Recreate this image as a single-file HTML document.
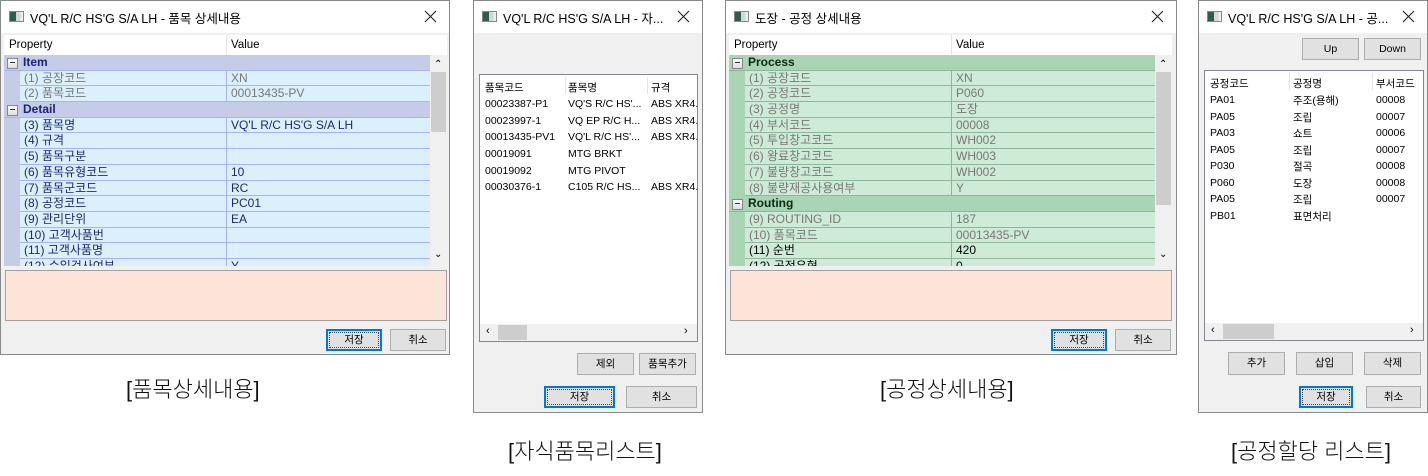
<!DOCTYPE html>
<html><head><meta charset="utf-8">
<style>
*{box-sizing:border-box;margin:0;padding:0}
body{width:1428px;height:476px;background:#fff;position:relative;overflow:hidden;font-family:"Liberation Sans","Noto Sans CJK KR","NanumGothic",sans-serif;font-size:11px;color:#000}
.win{position:absolute;background:#f0f0f0;border:1px solid #8a8a8a}
.tb{position:absolute;left:0;top:0;right:0;height:32px;background:#fff}
.ic{position:absolute;left:8px;top:10px;width:15px;height:11px;border:1px solid #888;background:linear-gradient(90deg,#2f5d4a 0 45%,#cfd8dc 45% 80%,#eee 80%)}
.tt{position:absolute;left:29px;top:7px;font-size:12.5px;white-space:nowrap;color:#000}
.x{position:absolute;right:12px;top:9px;width:13px;height:13px}
.a{position:absolute}
.btn{position:absolute;background:#e1e1e1;border:1px solid #adadad;text-align:center;font-size:10.5px;color:#000}
.btn.d{border:2px solid #0078d7;outline:1px dotted #444;outline-offset:-4px}
.pg{position:absolute;overflow:hidden}
.hd{position:absolute;height:20px;background:#fff;font-size:11.5px;line-height:20px}
.row{position:relative;height:15.7px;border-bottom:1px solid var(--ln);font-size:12px;line-height:15px;white-space:nowrap}
.cat{background:var(--cat);font-weight:bold;color:var(--ct);padding-left:19px}
.cat:before{content:"";position:absolute;left:3px;top:3px;width:9px;height:9px;border:1px solid #888;background:linear-gradient(#fff,#ddd)}
.cat:after{content:"";position:absolute;left:6px;top:7px;width:5px;height:1px;background:#333}
.dr{margin-left:16px;background:var(--rw)}
.dr span{position:absolute;left:4px}
.dr b{font-weight:normal;position:absolute;left:206px;padding-left:4px;border-left:1px solid var(--ln);height:15px}
.g{color:#777}
.sb{position:absolute;background:#f0f0f0}
.thumb{position:absolute;background:#cdcdcd}
.pink{position:absolute;background:#fde4d8;border:1px solid #a0a0a0}
.list{position:absolute;background:#fff;border:1px solid #828790;overflow:hidden}
.lr{position:absolute;font-size:10.5px;white-space:nowrap}
.cap{position:absolute;font-size:22px;font-weight:300;color:#111;white-space:nowrap}
</style></head><body>

<!-- Window 1 -->
<div class="win" style="left:0;top:0;width:450px;height:355px">
 <div class="tb"><div class="ic"></div><div class="tt">VQ'L R/C HS'G S/A LH - 품목 상세내용</div><svg class="x" viewBox="0 0 13 13"><path d="M1 1L12 12M12 1L1 12" stroke="#222" stroke-width="1.1"/></svg></div>
 <div class="hd" style="left:3px;top:34px;width:443px;padding-left:5px">Property<span style="position:absolute;left:222px;border-left:1px solid #e5e5e5;padding-left:4px">Value</span></div>
 <div class="pg" style="left:3px;top:54px;width:426px;height:211px;background:#c5cce8;--cat:#c5cce8;--rw:#dbeffc;--ln:#a9b3ee;--ct:#1a237e">
  <div class="row cat">Item</div>
  <div class="row dr g"><span>(1) 공장코드</span><b>XN</b></div>
  <div class="row dr g"><span>(2) 품목코드</span><b>00013435-PV</b></div>
  <div class="row cat">Detail</div>
  <div class="row dr" style="color:#1c2a6e"><span>(3) 품목명</span><b>VQ'L R/C HS'G S/A LH</b></div>
  <div class="row dr" style="color:#1c2a6e"><span>(4) 규격</span><b></b></div>
  <div class="row dr" style="color:#1c2a6e"><span>(5) 품목구분</span><b></b></div>
  <div class="row dr" style="color:#1c2a6e"><span>(6) 품목유형코드</span><b>10</b></div>
  <div class="row dr" style="color:#1c2a6e"><span>(7) 품목군코드</span><b>RC</b></div>
  <div class="row dr" style="color:#1c2a6e"><span>(8) 공정코드</span><b>PC01</b></div>
  <div class="row dr" style="color:#1c2a6e"><span>(9) 관리단위</span><b>EA</b></div>
  <div class="row dr" style="color:#1c2a6e"><span>(10) 고객사품번</span><b></b></div>
  <div class="row dr" style="color:#1c2a6e"><span>(11) 고객사품명</span><b></b></div>
  <div class="row dr" style="color:#1c2a6e"><span>(12) 수입검사여부</span><b>Y</b></div>
 </div>
 <div class="sb" style="left:429px;top:54px;width:17px;height:211px"><div class="a" style="left:4px;top:4px;font-size:10px">⌃</div><div class="thumb" style="left:1px;top:17px;width:15px;height:60px"></div><div class="a" style="left:4px;top:194px;font-size:10px">⌄</div></div>
 <div class="pink" style="left:4px;top:269px;width:442px;height:51px"></div>
 <div class="btn d" style="left:325px;top:328px;width:56px;height:22px;line-height:18px">저장</div>
 <div class="btn" style="left:389px;top:328px;width:56px;height:22px;line-height:20px">취소</div>
</div>

<!-- Window 2 -->
<div class="win" style="left:473px;top:0;width:230px;height:413px">
 <div class="tb"><div class="ic"></div><div class="tt">VQ'L R/C HS'G S/A LH - 자...</div><svg class="x" viewBox="0 0 13 13"><path d="M1 1L12 12M12 1L1 12" stroke="#222" stroke-width="1.1"/></svg></div>
 <div class="list" style="left:5px;top:73px;width:219px;height:268px">
  <div class="lr" style="left:5px;top:5px">품목코드</div><div class="a" style="left:85px;top:2px;width:1px;height:17px;background:#e5e5e5"></div>
  <div class="lr" style="left:88px;top:5px">품목명</div><div class="a" style="left:167px;top:2px;width:1px;height:17px;background:#e5e5e5"></div>
  <div class="lr" style="left:171px;top:5px">규격</div>
  <div class="lr" style="left:5px;top:23px">00023387-P1</div><div class="lr" style="left:88px;top:23px">VQ'S R/C HS'...</div><div class="lr" style="left:171px;top:23px">ABS XR4.</div>
  <div class="lr" style="left:5px;top:40px">00023997-1</div><div class="lr" style="left:88px;top:40px">VQ EP R/C H...</div><div class="lr" style="left:171px;top:40px">ABS XR4.</div>
  <div class="lr" style="left:5px;top:56px">00013435-PV1</div><div class="lr" style="left:88px;top:56px">VQ'L R/C HS'...</div><div class="lr" style="left:171px;top:56px">ABS XR4.</div>
  <div class="lr" style="left:5px;top:73px">00019091</div><div class="lr" style="left:88px;top:73px">MTG BRKT</div>
  <div class="lr" style="left:5px;top:90px">00019092</div><div class="lr" style="left:88px;top:90px">MTG PIVOT</div>
  <div class="lr" style="left:5px;top:106px">00030376-1</div><div class="lr" style="left:88px;top:106px">C105 R/C HS...</div><div class="lr" style="left:171px;top:106px">ABS XR4.</div>
  <div class="sb" style="left:0;top:249px;width:217px;height:17px"><div class="a" style="left:6px;top:1px;font-size:11px">‹</div><div class="thumb" style="left:18px;top:1px;width:29px;height:15px"></div><div class="a" style="left:204px;top:1px;font-size:11px">›</div></div>
 </div>
 <div class="btn" style="left:103px;top:352px;width:57px;height:22px;line-height:20px">제외</div>
 <div class="btn" style="left:165px;top:352px;width:57px;height:22px;line-height:20px">품목추가</div>
 <div class="btn d" style="left:70px;top:385px;width:71px;height:22px;line-height:18px">저장</div>
 <div class="btn" style="left:152px;top:385px;width:71px;height:22px;line-height:20px">취소</div>
</div>

<!-- Window 3 -->
<div class="win" style="left:725px;top:0;width:452px;height:355px">
 <div class="tb"><div class="ic"></div><div class="tt">도장 - 공정 상세내용</div><svg class="x" viewBox="0 0 13 13"><path d="M1 1L12 12M12 1L1 12" stroke="#222" stroke-width="1.1"/></svg></div>
 <div class="hd" style="left:3px;top:34px;width:443px;padding-left:5px">Property<span style="position:absolute;left:222px;border-left:1px solid #e5e5e5;padding-left:4px">Value</span></div>
 <div class="pg" style="left:3px;top:54px;width:426px;height:211px;background:#a9d5b5;--cat:#a9d5b5;--rw:#cdebd7;--ln:#8fb69a;--ct:#0d2a14">
  <div class="row cat">Process</div>
  <div class="row dr g"><span>(1) 공장코드</span><b>XN</b></div>
  <div class="row dr g"><span>(2) 공정코드</span><b>P060</b></div>
  <div class="row dr g"><span>(3) 공정명</span><b>도장</b></div>
  <div class="row dr g"><span>(4) 부서코드</span><b>00008</b></div>
  <div class="row dr g"><span>(5) 투입창고코드</span><b>WH002</b></div>
  <div class="row dr g"><span>(6) 왕료창고코드</span><b>WH003</b></div>
  <div class="row dr g"><span>(7) 불량창고코드</span><b>WH002</b></div>
  <div class="row dr g"><span>(8) 불량재공사용여부</span><b>Y</b></div>
  <div class="row cat">Routing</div>
  <div class="row dr g"><span>(9) ROUTING_ID</span><b>187</b></div>
  <div class="row dr g"><span>(10) 품목코드</span><b>00013435-PV</b></div>
  <div class="row dr"><span>(11) 순번</span><b>420</b></div>
  <div class="row dr"><span>(12) 공정유형</span><b>0</b></div>
 </div>
 <div class="sb" style="left:429px;top:54px;width:17px;height:211px"><div class="a" style="left:4px;top:4px;font-size:10px">⌃</div><div class="thumb" style="left:1px;top:17px;width:15px;height:133px"></div><div class="a" style="left:4px;top:194px;font-size:10px">⌄</div></div>
 <div class="pink" style="left:4px;top:269px;width:442px;height:51px"></div>
 <div class="btn d" style="left:325px;top:328px;width:56px;height:22px;line-height:18px">저장</div>
 <div class="btn" style="left:389px;top:328px;width:56px;height:22px;line-height:20px">취소</div>
</div>

<!-- Window 4 -->
<div class="win" style="left:1198px;top:0;width:230px;height:413px">
 <div class="tb"><div class="ic"></div><div class="tt">VQ'L R/C HS'G S/A LH - 공...</div><svg class="x" viewBox="0 0 13 13"><path d="M1 1L12 12M12 1L1 12" stroke="#222" stroke-width="1.1"/></svg></div>
 <div class="btn" style="left:103px;top:37px;width:57px;height:22px;line-height:20px">Up</div>
 <div class="btn" style="left:165px;top:37px;width:57px;height:22px;line-height:20px">Down</div>
 <div class="list" style="left:5px;top:69px;width:220px;height:271px">
  <div class="lr" style="left:5px;top:5px">공정코드</div><div class="a" style="left:84px;top:2px;width:1px;height:17px;background:#e5e5e5"></div>
  <div class="lr" style="left:88px;top:5px">공정명</div><div class="a" style="left:167px;top:2px;width:1px;height:17px;background:#e5e5e5"></div>
  <div class="lr" style="left:171px;top:5px">부서코드</div>
  <div class="lr" style="left:5px;top:23px">PA01</div><div class="lr" style="left:88px;top:22px">주조(용해)</div><div class="lr" style="left:171px;top:23px">00008</div>
  <div class="lr" style="left:5px;top:40px">PA05</div><div class="lr" style="left:88px;top:39px">조립</div><div class="lr" style="left:171px;top:40px">00007</div>
  <div class="lr" style="left:5px;top:56px">PA03</div><div class="lr" style="left:88px;top:55px">쇼트</div><div class="lr" style="left:171px;top:56px">00006</div>
  <div class="lr" style="left:5px;top:73px">PA05</div><div class="lr" style="left:88px;top:72px">조립</div><div class="lr" style="left:171px;top:73px">00007</div>
  <div class="lr" style="left:5px;top:89px">P030</div><div class="lr" style="left:88px;top:88px">절곡</div><div class="lr" style="left:171px;top:89px">00008</div>
  <div class="lr" style="left:5px;top:106px">P060</div><div class="lr" style="left:88px;top:105px">도장</div><div class="lr" style="left:171px;top:106px">00008</div>
  <div class="lr" style="left:5px;top:122px">PA05</div><div class="lr" style="left:88px;top:121px">조립</div><div class="lr" style="left:171px;top:122px">00007</div>
  <div class="lr" style="left:5px;top:139px">PB01</div><div class="lr" style="left:88px;top:138px">표면처리</div>
  <div class="sb" style="left:0;top:252px;width:218px;height:17px"><div class="a" style="left:6px;top:1px;font-size:11px">‹</div><div class="thumb" style="left:18px;top:1px;width:51px;height:15px"></div><div class="a" style="left:205px;top:1px;font-size:11px">›</div></div>
 </div>
 <div class="btn" style="left:29px;top:351px;width:57px;height:23px;line-height:21px">추가</div>
 <div class="btn" style="left:97px;top:351px;width:57px;height:23px;line-height:21px">삽입</div>
 <div class="btn" style="left:165px;top:351px;width:57px;height:23px;line-height:21px">삭제</div>
 <div class="btn d" style="left:100px;top:385px;width:54px;height:22px;line-height:18px">저장</div>
 <div class="btn" style="left:167px;top:385px;width:55px;height:22px;line-height:20px">취소</div>
</div>

<div class="cap" style="left:126px;top:372px">[품목상세내용]</div>
<div class="cap" style="left:508px;top:434px">[자식품목리스트]</div>
<div class="cap" style="left:880px;top:372px">[공정상세내용]</div>
<div class="cap" style="left:1231px;top:434px">[공정할당 리스트]</div>
</body></html>
